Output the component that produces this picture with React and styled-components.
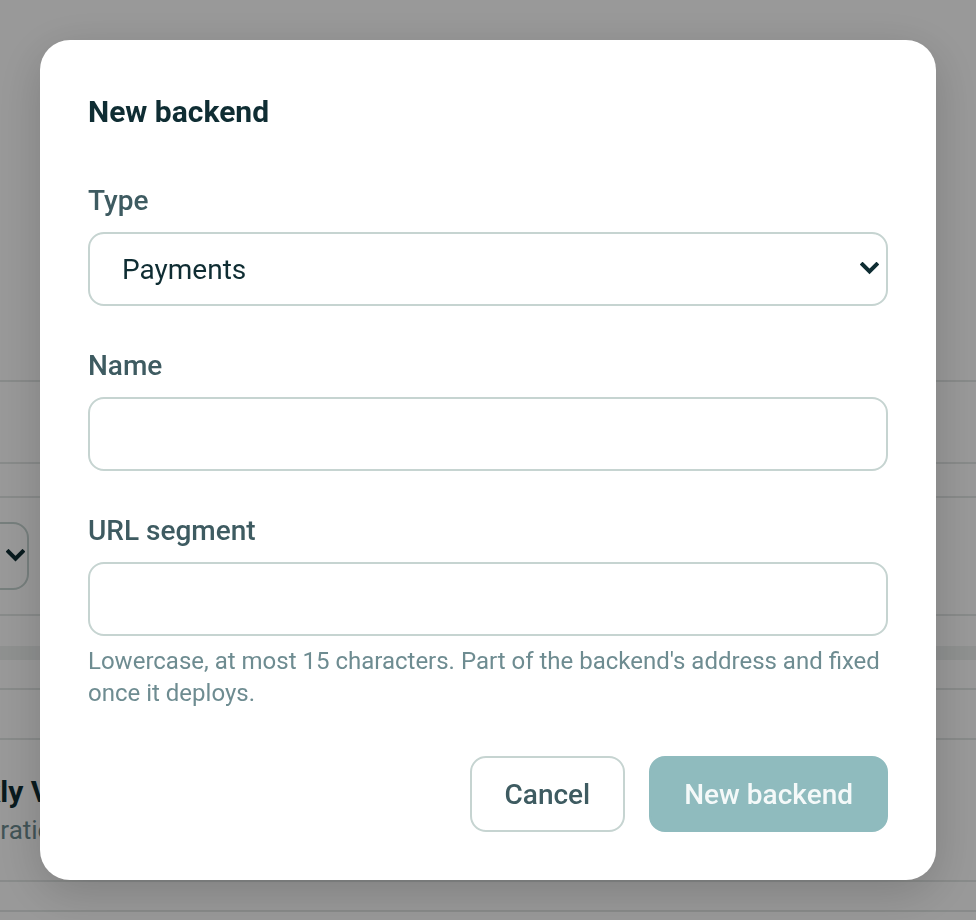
import styled, { createGlobalStyle } from 'styled-components';

const GlobalStyle = createGlobalStyle`
  html, body {
    margin: 0;
    padding: 0;
    background: #ffffff;
  }
  * {
    box-sizing: border-box;
  }
`;

const font = `Roboto, "Noto Sans", sans-serif`;

// page behind the dialog
const Page = styled.div`
  width: 976px;
  height: 920px;
  overflow: hidden;
  background: #ffffff;
  font-family: ${font};
`;

const Band = styled.div`
  height: ${p => p.$h}px;
  border-bottom: ${p => (p.$line ? '2px solid #e3e7e6' : 'none')};
  background: ${p => p.$bg || 'transparent'};
`;

const ToolbarRow = styled.div`
  height: 118px;
  display: flex;
  align-items: center;
  border-bottom: 2px solid #e3e7e6;
`;

const GhostSelect = styled.div`
  width: 120px;
  height: 68px;
  margin-left: -91px;
  border: 2px solid #c6d4d1;
  border-radius: 16px;
  display: flex;
  align-items: center;
  justify-content: flex-end;
  padding-right: 2px;
  color: #0f2d33;
`;

const StatBlock = styled.div`
  height: 142px;
  padding-top: 32px;
  border-bottom: 2px solid #e3e7e6;
`;

const StatTitle = styled.div`
  margin-left: -74px;
  font-size: 30px;
  font-weight: 700;
  line-height: 40px;
  color: #0f2d33;
  white-space: nowrap;
`;

const StatNote = styled.div`
  margin-left: -58px;
  font-size: 26px;
  line-height: 36px;
  color: #6e8c91;
  white-space: nowrap;
`;

// dialog
const Overlay = styled.div`
  position: fixed;
  inset: 0;
  background: rgba(0, 0, 0, 0.4);
  display: flex;
  align-items: center;
  justify-content: center;
`;

const Dialog = styled.div`
  width: 896px;
  background: #ffffff;
  border-radius: 30px;
  padding: 48px;
  box-shadow: 0 12px 48px rgba(0, 0, 0, 0.18);
  font-family: ${font};
  display: flex;
  flex-direction: column;
`;

const Title = styled.h2`
  margin: 0 0 46px;
  font-size: 30px;
  line-height: 48px;
  font-weight: 700;
  color: #0f2d33;
`;

const Field = styled.div`
  display: flex;
  flex-direction: column;
  margin-bottom: ${p => (p.$last ? 0 : 41)}px;
`;

const Label = styled.label`
  font-size: 28px;
  line-height: 38px;
  font-weight: 500;
  color: #3e5b61;
  margin-bottom: 12px;
`;

const SelectWrap = styled.div`
  position: relative;
`;

const Select = styled.select`
  appearance: none;
  width: 100%;
  height: 74px;
  padding: 0 60px 0 32px;
  border: 2px solid #c6d4d1;
  border-radius: 16px;
  background: #ffffff;
  font-family: ${font};
  font-size: 28px;
  color: #0f2d33;
  outline: none;
`;

const Chevron = styled.svg`
  position: absolute;
  right: 9px;
  top: 50%;
  margin-top: -7px;
  width: 19px;
  height: 13px;
  pointer-events: none;
`;

const Input = styled.input`
  width: 100%;
  height: 74px;
  padding: 0 32px;
  border: 2px solid #c6d4d1;
  border-radius: 16px;
  background: #ffffff;
  font-family: ${font};
  font-size: 28px;
  color: #0f2d33;
  outline: none;
`;

const Hint = styled.p`
  margin: 9px 0 0;
  font-size: 24px;
  line-height: 32px;
  color: #6e8c91;
`;

const Actions = styled.div`
  display: flex;
  justify-content: flex-end;
  gap: 24px;
  margin-top: 47px;
`;

const Button = styled.button`
  height: 76px;
  padding: 0 33px;
  border-radius: 16px;
  font-family: ${font};
  font-size: 28px;
  font-weight: 500;
  cursor: pointer;
  border: 2px solid ${p => (p.$primary ? '#8fbbbe' : '#c6d4d1')};
  background: ${p => (p.$primary ? '#8fbbbe' : '#ffffff')};
  color: ${p => (p.$primary ? '#f4f9f9' : '#3e5b61')};
`;

const ChevronIcon = ({ size }) => (
  <svg width={size} height={size * 0.7} viewBox="0 0 19 13" fill="none">
    <path d="M2.5 2.5 L9.5 9.5 L16.5 2.5" stroke="currentColor" strokeWidth="4" strokeLinecap="square" />
  </svg>
);

const App = () => {
  return (
    <>
      <GlobalStyle />
      <Page>
        <Band $h={382} $line />
        <Band $h={82} $line />
        <Band $h={34} $line />
        <ToolbarRow>
          <GhostSelect>
            <ChevronIcon size={19} />
          </GhostSelect>
        </ToolbarRow>
        <Band $h={30} />
        <Band $h={14} $bg="#eef1f0" />
        <Band $h={30} $line />
        <Band $h={50} $line />
        <StatBlock>
          <StatTitle>Weekly Volume</StatTitle>
          <StatNote>Integration calls</StatNote>
        </StatBlock>
        <Band $h={30} $line />
      </Page>
      <Overlay>
        <Dialog role="dialog" aria-label="New backend">
          <Title>New backend</Title>
          <Field>
            <Label>Type</Label>
            <SelectWrap>
              <Select defaultValue="payments">
                <option value="payments">Payments</option>
                <option value="auth">Auth</option>
                <option value="storage">Storage</option>
              </Select>
              <Chevron viewBox="0 0 19 13" fill="none">
                <path d="M2.5 2.5 L9.5 9.5 L16.5 2.5" stroke="#0f2d33" strokeWidth="4" strokeLinecap="square" />
              </Chevron>
            </SelectWrap>
          </Field>
          <Field>
            <Label>Name</Label>
            <Input type="text" />
          </Field>
          <Field $last>
            <Label>URL segment</Label>
            <Input type="text" />
            <Hint>
              Lowercase, at most 15 characters. Part of the backend's address and fixed once it deploys.
            </Hint>
          </Field>
          <Actions>
            <Button>Cancel</Button>
            <Button $primary disabled>New backend</Button>
          </Actions>
        </Dialog>
      </Overlay>
    </>
  );
};

export default App;
